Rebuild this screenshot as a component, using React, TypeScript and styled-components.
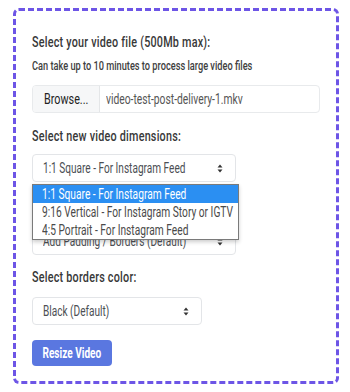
import styled, { createGlobalStyle, css } from "styled-components";

const GlobalStyle = createGlobalStyle`
  body {
    margin: 0;
    background: #fff;
    font-family: Roboto, "Liberation Sans", sans-serif;
  }
`;

// no condensed face is installed, so the narrow look is made by squeezing the text
const condensed = css`
  white-space: nowrap;
  transform: scaleX(0.72);
  transform-origin: 0 50%;
`;

const Page = styled.div`
  padding: 8px 11px 0 13px;
`;

const UploadBox = styled.form`
  position: relative;
  box-sizing: border-box;
  width: 326px;
  height: 376px;
  border: 3px dashed #6d55e6;
  border-radius: 6px;
  padding: 21px 16px 15px;
`;

const Label = styled.div<{ $gap?: number }>`
  ${condensed};
  font-size: 15px;
  font-weight: 500;
  line-height: 20px;
  letter-spacing: 0.3px;
  color: #383838;
  margin-top: ${(p) => p.$gap ?? 0}px;
`;

const Hint = styled.div`
  ${condensed};
  font-size: 12.8px;
  font-weight: 500;
  line-height: 16px;
  color: #404040;
  margin-top: 6px;
`;

const Text = styled.span`
  ${condensed};
  display: inline-block;
  flex: 1;
  min-width: 0;
`;

const FileInput = styled.div`
  display: flex;
  width: 288px;
  height: 28px;
  margin-top: 11px;
  border: 1px solid #e8eaec;
  border-radius: 4px;
  box-sizing: border-box;
  overflow: hidden;
  background: #fff;
`;

const BrowseButton = styled.div`
  display: flex;
  align-items: center;
  padding: 0 0 0 11px;
  width: 67px;
  flex-shrink: 0;
  box-sizing: border-box;
  background: #f6f7f8;
  border-right: 1px solid #e4e6e8;
  color: #222;
  font-size: 15px;
`;

const FileName = styled.div`
  display: flex;
  flex: 1;
  align-items: center;
  padding-left: 6px;
  color: #555;
  font-size: 14.3px;
`;

const Select = styled.div<{ $width: number; $gap: number }>`
  display: flex;
  align-items: center;
  box-sizing: border-box;
  width: ${(p) => p.$width}px;
  height: 28px;
  margin-top: ${(p) => p.$gap}px;
  padding: 0 12px 0 10px;
  border: 1px solid #e3e5e8;
  border-radius: 4px;
  background: #fff;
  color: #4c4f54;
  font-size: 14px;
`;

const Dropdown = styled.ul`
  position: absolute;
  left: 16px;
  top: 173px;
  width: 205px;
  margin: 0;
  padding: 0;
  list-style: none;
  background: #fff;
  border: 1px solid #7a7a7a;
  box-shadow: 0 2px 4px rgba(0, 0, 0, 0.2);
`;

const Option = styled.li<{ $active?: boolean }>`
  display: flex;
  height: 18px;
  line-height: 18px;
  padding-left: 9px;
  font-size: 14.2px;
  color: ${(p) => (p.$active ? "#fff" : "#4a4a4a")};
  background: ${(p) => (p.$active ? "#2b8ff2" : "transparent")};
`;

const ResizeButton = styled.button`
  display: flex;
  justify-content: center;
  align-items: center;
  margin-top: 15px;
  width: 80px;
  height: 26px;
  border: none;
  border-radius: 4px;
  background: #5a77e0;
  color: #fff;
  font-family: inherit;
  font-size: 14px;
  font-weight: bold;
  padding: 0;
`;

const ButtonText = styled.span`
  ${condensed};
  transform-origin: 50% 50%;
`;

function Arrows() {
  return (
    <svg width="6" height="9" viewBox="0 0 6 9">
      <path d="M3 0.5 L5.5 3.5 L0.5 3.5 Z" fill="#333" />
      <path d="M3 8.5 L5.5 5.5 L0.5 5.5 Z" fill="#333" />
    </svg>
  );
}

const options = [
  "1:1 Square - For Instagram Feed",
  "9:16 Vertical - For Instagram Story or IGTV",
  "4:5 Portrait - For Instagram Feed",
];

export default function App() {
  return (
    <Page>
      <GlobalStyle />
      <UploadBox>
        <Label>Select your video file (500Mb max):</Label>
        <Hint>Can take up to 10 minutes to process large video files</Hint>
        <FileInput>
          <BrowseButton>
            <Text>Browse...</Text>
          </BrowseButton>
          <FileName>
            <Text>video-test-post-delivery-1.mkv</Text>
          </FileName>
        </FileInput>

        <Label $gap={13}>Select new video dimensions:</Label>
        <Select $width={204} $gap={8}>
          <Text>{options[0]}</Text>
          <Arrows />
        </Select>

        <Label $gap={13}>Select padding type:</Label>
        <Select $width={204} $gap={12}>
          <Text>Add Padding / Borders (Default)</Text>
          <Arrows />
        </Select>

        <Label $gap={12}>Select borders color:</Label>
        <Select $width={170} $gap={10}>
          <Text>Black (Default)</Text>
          <Arrows />
        </Select>

        <ResizeButton type="button">
          <ButtonText>Resize Video</ButtonText>
        </ResizeButton>

        <Dropdown>
          {options.map((o, i) => (
            <Option key={o} $active={i === 0}>
              <Text>{o}</Text>
            </Option>
          ))}
        </Dropdown>
      </UploadBox>
    </Page>
  );
}
